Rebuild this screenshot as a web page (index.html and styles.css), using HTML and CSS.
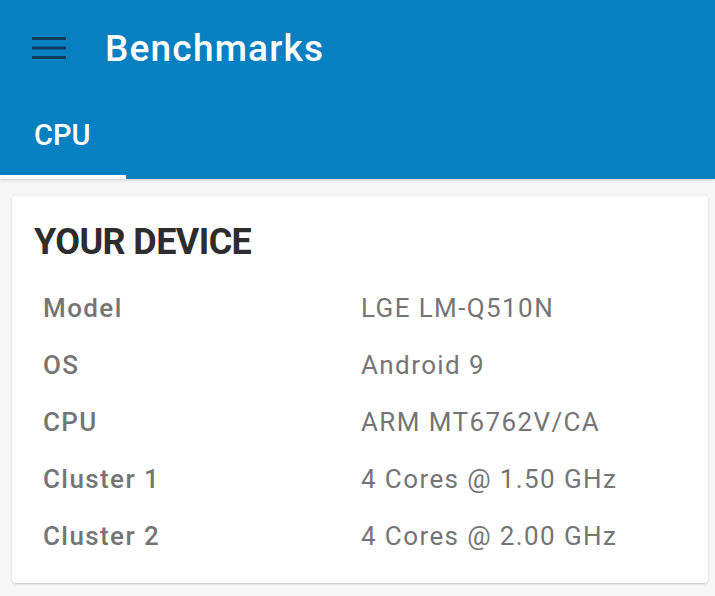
FILE: index.html
```html
<!DOCTYPE html>
<html lang="en">
<head>
  <meta charset="UTF-8">
  <meta name="viewport" content="width=device-width, initial-scale=1.0">
  <title>Benchmarks</title>
  <link rel="stylesheet" href="styles.css">
</head>
<body>
  <header class="app-bar">
    <div class="toolbar">
      <button class="menu-btn" aria-label="Menu">
        <svg width="34" height="24" viewBox="0 0 34 24">
          <rect x="0" y="1" width="34" height="3"/>
          <rect x="0" y="10.5" width="34" height="3"/>
          <rect x="0" y="20" width="34" height="3"/>
        </svg>
      </button>
      <h1>Benchmarks</h1>
    </div>
    <nav class="tabs">
      <div class="tab active">CPU</div>
    </nav>
  </header>

  <main>
    <section class="card">
      <h2>YOUR DEVICE</h2>
      <dl class="specs">
        <dt>Model</dt><dd>LGE LM-Q510N</dd>
        <dt>OS</dt><dd>Android 9</dd>
        <dt>CPU</dt><dd>ARM MT6762V/CA</dd>
        <dt>Cluster 1</dt><dd>4 Cores @ 1.50 GHz</dd>
        <dt>Cluster 2</dt><dd>4 Cores @ 2.00 GHz</dd>
      </dl>
    </section>
  </main>
</body>
</html>
```

FILE: styles.css
```css
body {
  margin: 0;
  font-family: Roboto, 'Liberation Sans', sans-serif;
  background-color: #f6f6f6;
}
.app-bar {
  background-color: #0780c2;
  color: white;
  box-shadow: 0 1px 3px rgba(0, 0, 0, 0.18);
}
.toolbar {
  height: 96px;
  display: flex;
  align-items: center;
}
.menu-btn {
  background: none;
  border: none;
  padding: 0;
  margin-left: 32px;
  width: 34px;
  height: 24px;
  fill: #0c3d5e;
  display: flex;
}
.toolbar h1 {
  margin: 0 0 0 39px;
  font-size: 37px;
  font-weight: 500;
  letter-spacing: 1.2px;
}
.tabs {
  display: flex;
  height: 83px;
}
.tab {
  width: 126px;
  box-sizing: border-box;
  padding-left: 34px;
  font-size: 29px;
  font-weight: 500;
  line-height: 83px;
}
.tab.active {
  border-bottom: 4px solid white;
  line-height: 79px;
}
main {
  padding: 17px 7px 12px 12px;
}
.card {
  background-color: white;
  border-radius: 4px;
  box-shadow: 0 1px 2px rgba(0, 0, 0, 0.2);
  padding: 24px 29px 18px 22px;
}
.card h2 {
  margin: 0 0 16px 0;
  font-size: 36px;
  line-height: 44px;
  font-weight: 700;
  letter-spacing: -0.6px;
  color: #2d2d2d;
}
.specs {
  display: grid;
  grid-template-columns: 318px 1fr;
  margin: 0 0 0 9px;
  font-size: 26px;
  line-height: 57px;
  letter-spacing: 1.4px;
  color: #757575;
}
.specs dt {
  font-weight: 500;
}
.specs dd {
  margin: 0;
}
```
